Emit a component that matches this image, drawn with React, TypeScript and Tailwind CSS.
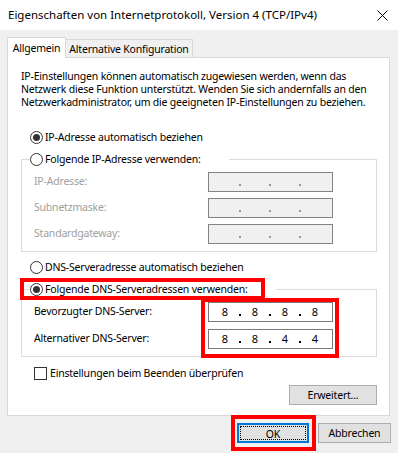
const Radio = ({ checked, label }: { checked?: boolean; label: string }) => (
    <span className="flex items-center gap-[2px] h-[13px] bg-white">
        <span className="w-[13px] h-[13px] rounded-full border border-[#333333] bg-white flex items-center justify-center shrink-0">
            {checked && <span className="w-[7px] h-[7px] rounded-full bg-[#333333]" />}
        </span>
        <span className="leading-[13px] whitespace-nowrap">{label}</span>
    </span>
)

const IpField = ({ values, disabled }: { values?: string[]; disabled?: boolean }) => {
    const parts = values ?? ['', '', '', '']
    return (
        <div className={`w-[125px] h-[20px] border flex items-center pl-[4px] ${disabled ? 'bg-[#f0f0f0] border-[#838383]' : 'bg-white border-[#7a7a7a]'}`}>
            {parts.map((p, i) => (
                <div key={i} className="flex items-center">
                    <span className="w-[24px] text-center leading-[18px] text-[11px] tracking-normal">{p}</span>
                    {i < 3 && (
                        <span className="w-[6px] flex justify-center">
                            <span className={`w-[2px] h-[2px] mt-[5px] ${disabled ? 'bg-[#8a9aa8]' : 'bg-black'}`} />
                        </span>
                    )}
                </div>
            ))}
        </div>
    )
}

const Row = ({ label, disabled, values }: { label: string; disabled?: boolean; values?: string[] }) => (
    <div className="flex items-center h-[20px]">
        <span className={`w-[186px] pl-[12px] whitespace-nowrap ${disabled ? 'text-[#a0a0a0]' : ''}`}>{label}</span>
        <IpField disabled={disabled} values={values} />
    </div>
)

export default function App() {
    return (
        <div className="relative w-[398px] h-[453px] bg-[#f0f0f0] text-black text-[10.5px] tracking-[-0.2px] font-['Noto_Sans',sans-serif] overflow-hidden">
            {/* title bar */}
            <div className="h-[30px] bg-white flex items-center justify-between pl-[8px] pr-[10px] text-[11.5px] tracking-normal">
                <span className="whitespace-nowrap">Eigenschaften von Internetprotokoll, Version 4 (TCP/IPv4)</span>
                <svg width="11" height="11" viewBox="0 0 11 11">
                    <path d="M0.5 0.5 L10.5 10.5 M10.5 0.5 L0.5 10.5" stroke="#000" strokeWidth="1" />
                </svg>
            </div>

            <div className="px-[7px] pt-[7px]">
                {/* tabs */}
                <div className="flex items-end h-[20px]">
                    <div className="relative z-10 w-[59px] h-[21px] -mb-px bg-white border border-b-0 border-[#d9d9d9] flex justify-center pt-[4px] leading-[13px] whitespace-nowrap">
                        Allgemein
                    </div>
                    <div className="w-[127px] h-[18px] bg-[#f0f0f0] border border-l-0 border-b-0 border-[#d9d9d9] flex justify-center pt-[3px] leading-[13px] whitespace-nowrap">
                        Alternative Konfiguration
                    </div>
                </div>

                {/* panel */}
                <div className="w-[383px] h-[359px] bg-white border border-[#d9d9d9] flex flex-col">
                    <p className="pl-[13px] pt-[12px] leading-[13px] whitespace-nowrap">
                        IP-Einstellungen können automatisch zugewiesen werden, wenn das<br />
                        Netzwerk diese Funktion unterstützt. Wenden Sie sich andernfalls an den<br />
                        Netzwerkadministrator, um die geeigneten IP-Einstellungen zu beziehen.
                    </p>

                    <div className="pl-[22px] mt-[22px]">
                        <Radio checked label="IP-Adresse automatisch beziehen" />
                    </div>

                    <fieldset className="ml-[13px] mr-[12px] mt-[9px] border border-[#dcdcdc] pb-[7px]">
                        <legend className="ml-[8px] pr-[28px]">
                            <Radio label="Folgende IP-Adresse verwenden:" />
                        </legend>
                        <div className="flex flex-col gap-[6px] pt-[6px]">
                            <Row label="IP-Adresse:" disabled />
                            <Row label="Subnetzmaske:" disabled />
                            <Row label="Standardgateway:" disabled />
                        </div>
                    </fieldset>

                    <div className="pl-[22px] mt-[9px]">
                        <Radio label="DNS-Serveradresse automatisch beziehen" />
                    </div>

                    <fieldset className="ml-[13px] mr-[12px] mt-[9px] border border-[#dcdcdc] pb-[7px]">
                        <legend className="ml-[8px] pr-[28px]">
                            <Radio checked label="Folgende DNS-Serveradressen verwenden:" />
                        </legend>
                        <div className="flex flex-col gap-[7px] pt-[6px]">
                            <Row label="Bevorzugter DNS-Server:" values={['8', '8', '8', '8']} />
                            <Row label="Alternativer DNS-Server:" values={['8', '8', '4', '4']} />
                        </div>
                    </fieldset>

                    <div className="flex items-center gap-[3px] pl-[26px] mt-[10px] h-[13px]">
                        <span className="w-[13px] h-[13px] border border-[#333333] bg-white shrink-0" />
                        <span className="whitespace-nowrap">Einstellungen beim Beenden überprüfen</span>
                    </div>

                    <div className="flex justify-end pr-[12px] mt-[5px]">
                        <button className="w-[88px] h-[20px] bg-[#e1e1e1] border border-[#adadad] leading-[18px]">
                            Erweitert...
                        </button>
                    </div>
                </div>

                {/* dialog buttons */}
                <div className="flex justify-end gap-[9px] mt-[7px]">
                    <button className="w-[72px] h-[20px] bg-[#e1e1e1] border-2 border-[#0078d7] p-px">
                        <span className="block w-full h-full border border-dotted border-black leading-[14px]">OK</span>
                    </button>
                    <button className="w-[73px] h-[20px] bg-[#e1e1e1] border border-[#adadad] leading-[18px]">
                        Abbrechen
                    </button>
                </div>
            </div>

            {/* red annotation boxes */}
            <div className="absolute left-[20px] top-[278px] w-[245px] h-[22px] border-4 border-[#ff0000]" />
            <div className="absolute left-[201px] top-[298px] w-[138px] h-[60px] border-4 border-[#ff0000]" />
            <div className="absolute left-[231px] top-[415px] w-[85px] h-[36px] border-4 border-[#ff0000]" />
        </div>
    )
}
